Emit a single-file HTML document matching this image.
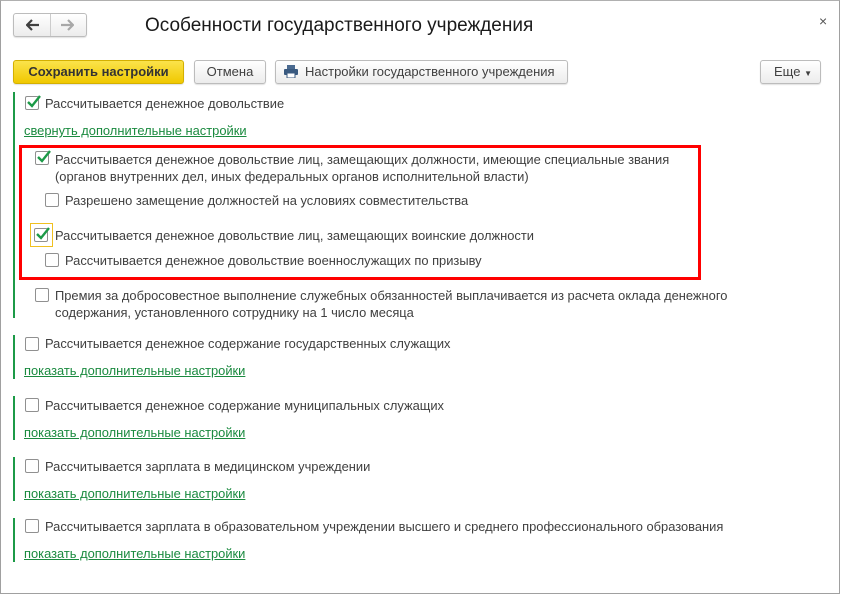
<!DOCTYPE html>
<html><head><meta charset="utf-8"><style>
*{box-sizing:border-box;margin:0;padding:0}
body{width:841px;height:595px;background:#fff;font-family:"Liberation Sans",Arial,sans-serif;font-size:12.9px;color:#404040;position:relative;overflow:hidden}
.win{position:absolute;left:0;top:0;width:840px;height:594px;border:1px solid #a0a0a0;border-top-color:#b0b0b0}
.a{position:absolute;white-space:nowrap}
.btn{position:absolute;height:24px;border:1px solid #bcbcbc;border-radius:3px;background:linear-gradient(#fff,#ececec);box-shadow:0 1px 1px rgba(0,0,0,.12);font-size:13px;color:#404040;line-height:22px;text-align:center}
.cb{position:absolute;width:14px;height:14px;border:1px solid #909090;border-radius:2px;background:#fff}
.cb svg{position:absolute;left:0;top:-2px}
.bar{position:absolute;left:13px;width:2px;background:#1c9a47}
.lnk{position:absolute;color:#1a8a3f;text-decoration:underline;white-space:nowrap}
</style></head><body>
<div class="win"></div>
<div class="btn" style="left:13px;top:13px;width:74px;height:24px;padding:0"></div>
<div class="a" style="left:50px;top:14px;width:1px;height:22px;background:#ccc"></div>
<svg class="a" style="left:26px;top:19px" width="14" height="12"><path d="M1 6H13M6 1L1 6L6 11" stroke="#404040" stroke-width="2.2" fill="none"/></svg>
<svg class="a" style="left:60px;top:19px" width="14" height="12"><path d="M1 6H13M8 1L13 6L8 11" stroke="#a8a8a8" stroke-width="2.2" fill="none"/></svg>
<div class="a" style="left:145px;top:15px;font-size:19px;color:#1a1a1a">Особенности государственного учреждения</div>
<div class="a" style="left:819px;top:13px;font-size:14px;color:#555">×</div>
<div class="btn" style="left:13px;top:60px;width:171px;background:linear-gradient(#fbe34b,#f0c800);border-color:#d4b000;font-weight:bold;color:#333">Сохранить настройки</div>
<div class="btn" style="left:194px;top:60px;width:72px">Отмена</div>
<div class="btn" style="left:275px;top:60px;width:293px;text-align:left;padding-left:29px">Настройки государственного учреждения</div>
<svg class="a" style="left:284px;top:65px" width="14" height="13"><rect x="3" y="0" width="8" height="4" fill="#4a6a90"/><rect x="0" y="4" width="14" height="6" rx="1" fill="#3a5a80"/><rect x="3" y="8" width="8" height="5" fill="#fff" stroke="#3a5a80"/></svg>
<div class="btn" style="left:760px;top:60px;width:61px;text-align:left;padding-left:13px">Еще <span style="font-size:8px">▼</span></div>

<div class="bar" style="top:92px;height:226px"></div>
<div class="bar" style="top:335px;height:44px"></div>
<div class="bar" style="top:396px;height:44px"></div>
<div class="bar" style="top:457px;height:44px"></div>
<div class="bar" style="top:518px;height:44px"></div>

<div class="cb" style="left:25px;top:96px"><svg width="16" height="14"><path d="M2 7L6 11L14 1" stroke="#1c9a47" stroke-width="2.4" fill="none"/></svg></div>
<div class="a" style="left:45px;top:96px">Рассчитывается денежное довольствие</div>
<div class="lnk" style="left:24px;top:123px">свернуть дополнительные настройки</div>

<div class="a" style="left:19px;top:145px;width:682px;height:135px;border:3px solid #f00"></div>
<div class="cb" style="left:35px;top:151px"><svg width="16" height="14"><path d="M2 7L6 11L14 1" stroke="#1c9a47" stroke-width="2.4" fill="none"/></svg></div>
<div class="a" style="left:55px;top:151px;line-height:17px">Рассчитывается денежное довольствие лиц, замещающих должности, имеющие специальные звания<br>(органов внутренних дел, иных федеральных органов исполнительной власти)</div>
<div class="cb" style="left:45px;top:193px"></div>
<div class="a" style="left:65px;top:193px">Разрешено замещение должностей на условиях совместительства</div>
<div class="a" style="left:30px;top:223px;width:23px;height:24px;border:1px solid #f0c020"></div>
<div class="cb" style="left:34px;top:228px"><svg width="16" height="14"><path d="M2 7L6 11L14 1" stroke="#1c9a47" stroke-width="2.4" fill="none"/></svg></div>
<div class="a" style="left:55px;top:228px">Рассчитывается денежное довольствие лиц, замещающих воинские должности</div>
<div class="cb" style="left:45px;top:253px"></div>
<div class="a" style="left:65px;top:253px">Рассчитывается денежное довольствие военнослужащих по призыву</div>

<div class="cb" style="left:35px;top:288px"></div>
<div class="a" style="left:55px;top:287px;line-height:17px">Премия за добросовестное выполнение служебных обязанностей выплачивается из расчета оклада денежного<br>содержания, установленного сотруднику на 1 число месяца</div>

<div class="cb" style="left:25px;top:337px"></div>
<div class="a" style="left:45px;top:336px">Рассчитывается денежное содержание государственных служащих</div>
<div class="lnk" style="left:24px;top:363px">показать дополнительные настройки</div>

<div class="cb" style="left:25px;top:398px"></div>
<div class="a" style="left:45px;top:398px">Рассчитывается денежное содержание муниципальных служащих</div>
<div class="lnk" style="left:24px;top:425px">показать дополнительные настройки</div>

<div class="cb" style="left:25px;top:459px"></div>
<div class="a" style="left:45px;top:459px">Рассчитывается зарплата в медицинском учреждении</div>
<div class="lnk" style="left:24px;top:486px">показать дополнительные настройки</div>

<div class="cb" style="left:25px;top:519px"></div>
<div class="a" style="left:45px;top:519px">Рассчитывается зарплата в образовательном учреждении высшего и среднего профессионального образования</div>
<div class="lnk" style="left:24px;top:546px">показать дополнительные настройки</div>
</body></html>
